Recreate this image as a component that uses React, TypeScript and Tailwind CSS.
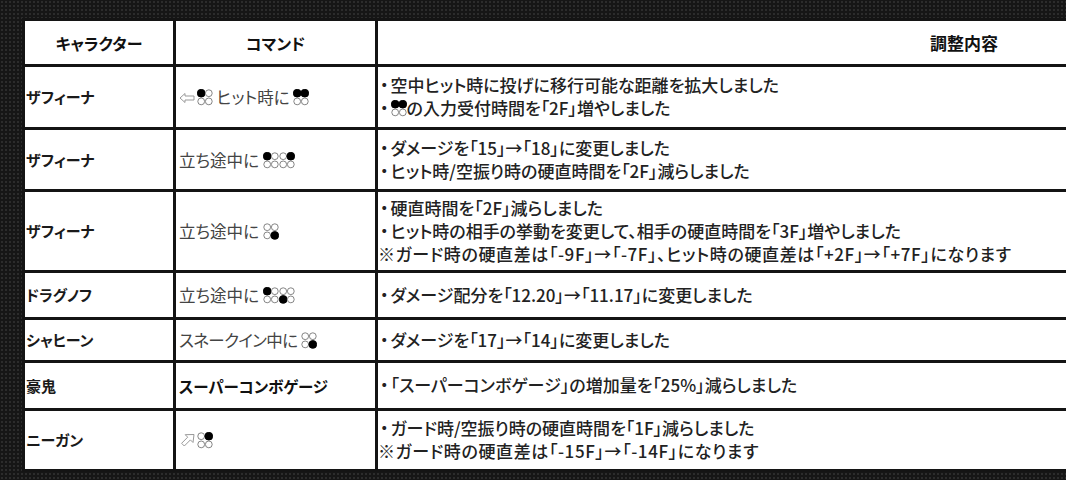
import React from "react"

type Btn = [boolean, boolean, boolean, boolean]

const Buttons = ({ on }: { on: Btn }) => {
    const pos = [
        [4.2, 4.2],
        [11.8, 4.2],
        [4.2, 12.4],
        [11.8, 12.4],
    ]
    return (
        <svg width="16" height="17" viewBox="0 0 16 17" className="inline-block align-[-2px]">
            {pos.map(([cx, cy], i) => (
                <circle
                    key={i}
                    cx={cx}
                    cy={cy}
                    r={on[i] ? 3.9 : 3.4}
                    fill={on[i] ? "#000" : "#fff"}
                    stroke={on[i] ? "#000" : "#777"}
                    strokeWidth="0.9"
                />
            ))}
        </svg>
    )
}

const ArrowLeft = () => (
    <svg width="16" height="12" viewBox="0 0 16 12" className="inline-block align-[0px] mr-[2px]">
        <path d="M1 6 L6 1.5 L6 4 L15 4 L15 8 L6 8 L6 10.5 Z" fill="#fff" stroke="#999" strokeWidth="1" strokeLinejoin="round" />
    </svg>
)

const ArrowUpRight = () => (
    <svg width="17" height="17" viewBox="0 0 17 17" className="inline-block align-[-3px] mr-[1px]">
        <path d="M15 1.5 L14 9.5 L11.4 6.9 L5.3 13 L2.6 10.3 L8.7 4.2 L6.2 1.7 Z" fill="#fff" stroke="#999" strokeWidth="1" strokeLinejoin="round" />
    </svg>
)

// bullet dot, narrow like the original's proportional font
const Dot = () => <span className="ml-[2px] mr-[2px]">・</span>

// note lines (※) run a little wider in the original
const Note = ({ children }: { children: React.ReactNode }) => <span className="tracking-[0.6px]">{children}</span>

type Row = {
    name: string
    command: React.ReactNode
    lines: React.ReactNode[]
    h: string
}

const rows: Row[] = [
    {
        name: "ザフィーナ",
        command: (
            <>
                <ArrowLeft />
                <Buttons on={[true, false, false, false]} /> ヒット時に <Buttons on={[true, true, false, false]} />
            </>
        ),
        lines: [
            <>
                <Dot />空中ヒット時に投げに移行可能な距離を拡大しました
            </>,
            <>
                <Dot />
                <Buttons on={[true, true, false, false]} />の入力受付時間を「2F」増やしました
            </>,
        ],
        h: "h-[63px]",
    },
    {
        name: "ザフィーナ",
        command: (
            <>
                立ち途中に <Buttons on={[true, false, false, false]} />
                <Buttons on={[false, true, false, false]} />
            </>
        ),
        lines: [
            <>
                <Dot />ダメージを「15」→「18」に変更しました
            </>,
            <>
                <Dot />ヒット時/空振り時の硬直時間を「2F」減らしました
            </>,
        ],
        h: "h-[62px]",
    },
    {
        name: "ザフィーナ",
        command: (
            <>
                立ち途中に <Buttons on={[false, false, false, true]} />
            </>
        ),
        lines: [
            <>
                <Dot />硬直時間を「2F」減らしました
            </>,
            <>
                <Dot />ヒット時の相手の挙動を変更して、相手の硬直時間を「3F」増やしました
            </>,
            <Note>※ガード時の硬直差は「-9F」→「-7F」、ヒット時の硬直差は「+2F」→「+7F」になります</Note>,
        ],
        h: "h-[81px]",
    },
    {
        name: "ドラグノフ",
        command: (
            <>
                立ち途中に <Buttons on={[true, false, false, false]} />
                <Buttons on={[false, false, true, false]} />
            </>
        ),
        lines: [
            <>
                <Dot />ダメージ配分を「12.20」→「11.17」に変更しました
            </>,
        ],
        h: "h-[47px]",
    },
    {
        name: "シャヒーン",
        command: (
            <span className="tracking-[-0.6px]">
                スネークイン中に <Buttons on={[false, false, false, true]} />
            </span>
        ),
        lines: [
            <>
                <Dot />ダメージを「17」→「14」に変更しました
            </>,
        ],
        h: "h-[43px]",
    },
    {
        name: "豪鬼",
        command: <span className="font-bold text-[15.5px] text-[#111]">スーパーコンボゲージ</span>,
        lines: [
            <>
                <Dot />「スーパーコンボゲージ」の増加量を「25%」減らしました
            </>,
        ],
        h: "h-[48px]",
    },
    {
        name: "ニーガン",
        command: (
            <>
                <ArrowUpRight />
                <Buttons on={[false, true, false, false]} />
            </>
        ),
        lines: [
            <>
                <Dot />ガード時/空振り時の硬直時間を「1F」減らしました
            </>,
            <Note>※ガード時の硬直差は「-15F」→「-14F」になります</Note>,
        ],
        h: "h-[61px]",
    },
]

export default function App() {
    return (
        <div className="w-[1066px] h-[480px] overflow-hidden bg-[#161616] bg-[radial-gradient(#2c2c2c_1px,transparent_1px)] [background-size:4px_4px] pl-[22px] pt-[18px] font-['Noto_Sans_CJK_JP','Noto_Sans',sans-serif] [font-feature-settings:'palt']">
            <table className="border-collapse bg-white w-[1528px] table-fixed text-[17px] leading-[24px]">
                <colgroup>
                    <col className="w-[151px]" />
                    <col className="w-[202px]" />
                    <col className="w-[1175px]" />
                </colgroup>
                <thead>
                    <tr className="h-[46px]">
                        <th className="border-[3px] border-[#141414] font-bold text-[16px] text-[#111] text-center">キャラクター</th>
                        <th className="border-[3px] border-[#141414] font-bold text-[16px] text-[#111] text-center">コマンド</th>
                        <th className="border-[3px] border-[#141414] font-bold text-[17px] text-[#111] text-center">調整内容</th>
                    </tr>
                </thead>
                <tbody>
                    {rows.map((r, i) => (
                        <tr key={i} className={r.h}>
                            <td className="border-[3px] border-[#141414] pl-[1px] text-[15px] font-bold text-[#1a1a1a] align-middle">{r.name}</td>
                            <td className="border-[3px] border-[#141414] pl-[3px] text-[16.5px] text-[#444] align-middle whitespace-nowrap">
                                {r.command}
                            </td>
                            <td className="border-[3px] border-[#141414] pl-0 font-medium text-[#222] align-middle whitespace-nowrap">
                                {r.lines.map((l, j) => (
                                    <div key={j} className="-mt-[1px]">
                                        {l}
                                    </div>
                                ))}
                            </td>
                        </tr>
                    ))}
                </tbody>
            </table>
        </div>
    )
}
